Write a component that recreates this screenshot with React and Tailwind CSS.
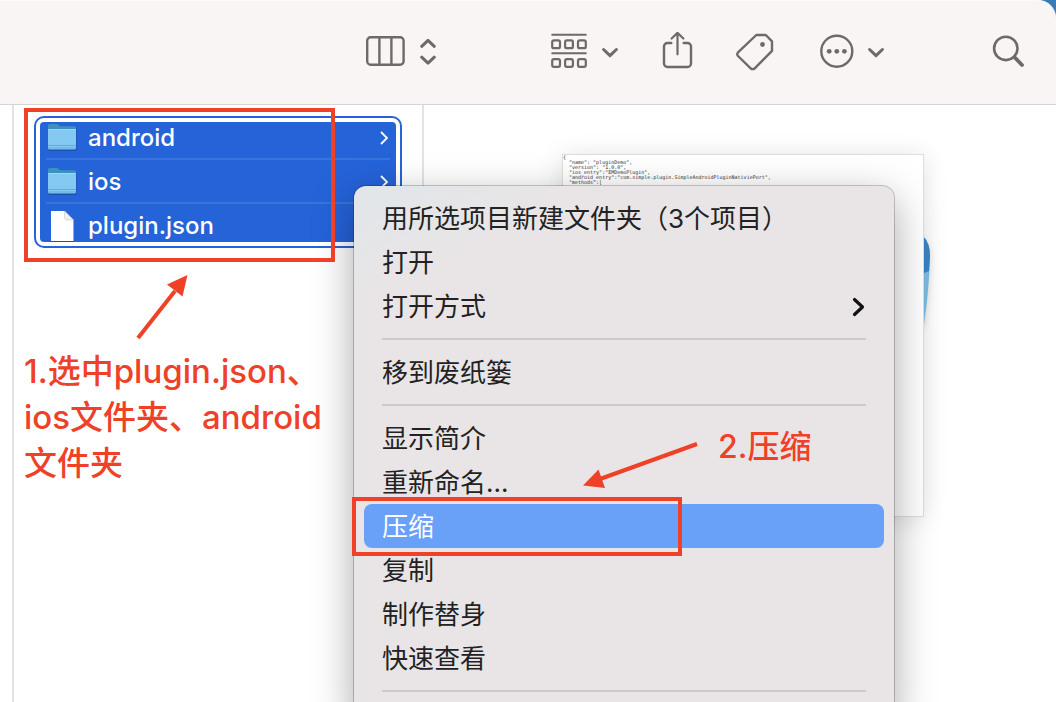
import clsx from 'clsx';

const files = [
    { name: 'android', kind: 'folder' },
    { name: 'ios', kind: 'folder' },
    { name: 'plugin.json', kind: 'file' },
];

const menuGroups = [
    [{ label: '用所选项目新建文件夹（3个项目）' }, { label: '打开' }, { label: '打开方式', submenu: true }],
    [{ label: '移到废纸篓' }],
    [
        { label: '显示简介' },
        { label: '重新命名...' },
        { label: '压缩', active: true },
        { label: '复制' },
        { label: '制作替身' },
        { label: '快速查看' },
    ],
    [],
];

const json = `{
  "name": "pluginDemo",
  "version": "1.0.0",
  "ios_entry":"EMDemoPlugin",
  "android_entry":"com.simple.plugin.SimpleAndroidPluginNativiePort",
  "methods":[`;

function Icon({ className, viewBox, children }) {
    return (
        <svg className={className} viewBox={viewBox} fill="none" stroke="currentColor" strokeWidth="2.4" strokeLinecap="round" strokeLinejoin="round" aria-hidden="true">
            {children}
        </svg>
    );
}

function Chevron() {
    return (
        <Icon className="w-4 h-10" viewBox="0 0 16 40">
            <path d="M1.6 17.5 8 23.7 14.4 17.5" strokeWidth="3" />
        </Icon>
    );
}

function Toolbar() {
    return (
        <header className="h-[105px] shrink-0 flex items-start pt-[31px] pl-[366px] pr-8 bg-[#f9f5f4] border-t border-t-[#fdfbfb] border-b border-b-[#d9d5d4] text-[#6f6a69] rounded-tr-[18px]">
            <button aria-label="Columns" className="flex gap-[15px]">
                <Icon className="w-[39px] h-10" viewBox="0 0 39 40">
                    <rect x="1.2" y="5.2" width="36.4" height="27.6" rx="3.5" />
                    <path d="M13.4 5.2v27.6M25.4 5.2v27.6" />
                </Icon>
                <Icon className="w-4 h-10" viewBox="0 0 16 40">
                    <path d="M1.7 14.3 8 8.3l6.3 6M1.7 25.2 8 31.2l6.3-6" strokeWidth="3" />
                </Icon>
            </button>
            <button aria-label="Group" className="ml-[115px] flex gap-[15px]">
                <Icon className="w-9 h-10" viewBox="0 0 36 40">
                    <path d="M1.2 2.7h33.6M1.2 21.3h33.6" strokeWidth="2" />
                    <rect x="1.2" y="8.4" width="7.8" height="7.8" rx="1.8" strokeWidth="2.2" />
                    <rect x="14.1" y="8.4" width="7.8" height="7.8" rx="1.8" strokeWidth="2.2" />
                    <rect x="27" y="8.4" width="7.8" height="7.8" rx="1.8" strokeWidth="2.2" />
                    <rect x="1.2" y="27.1" width="7.8" height="7.8" rx="1.8" strokeWidth="2.2" />
                    <rect x="14.1" y="27.1" width="7.8" height="7.8" rx="1.8" strokeWidth="2.2" />
                    <rect x="27" y="27.1" width="7.8" height="7.8" rx="1.8" strokeWidth="2.2" />
                </Icon>
                <Chevron />
            </button>
            <button aria-label="Share" className="ml-11">
                <Icon className="w-[31px] h-10" viewBox="0 0 31 40">
                    <path d="M9.3 11H5.5A3.5 3.5 0 0 0 2 14.5v17A3.5 3.5 0 0 0 5.5 35h20a3.5 3.5 0 0 0 3.5-3.5v-17A3.5 3.5 0 0 0 25.5 11h-3.8" />
                    <path d="M15.5 22.3V.8M9.6 6.5 15.5.9 21.4 6.5" strokeWidth="2.2" />
                </Icon>
            </button>
            <button aria-label="Tags" className="ml-[43px]">
                <Icon className="w-[38px] h-10" viewBox="0 0 38 40">
                    <path d="M20.3 3h9.5l6.2 6.3v9.6L18.7 36.3a2.8 2.8 0 0 1-4 0L2 24a2.8 2.8 0 0 1 0-3.6z" />
                    <circle cx="26.5" cy="12.5" r="2.4" fill="currentColor" stroke="none" />
                </Icon>
            </button>
            <button aria-label="More" className="ml-[46px] flex gap-[14px]">
                <Icon className="w-[34px] h-10" viewBox="0 0 34 40">
                    <circle cx="16.8" cy="19.2" r="15.5" />
                    <g fill="currentColor" stroke="none">
                        <circle cx="9.2" cy="19.3" r="2.4" />
                        <circle cx="16.8" cy="19.3" r="2.4" />
                        <circle cx="24.4" cy="19.3" r="2.4" />
                    </g>
                </Icon>
                <Chevron />
            </button>
            <button aria-label="Search" className="ml-auto">
                <Icon className="w-8 h-10" viewBox="0 0 32 40">
                    <circle cx="13.8" cy="16.4" r="11.7" strokeWidth="2.6" />
                    <path d="m22.5 25.2 7.5 7.8" strokeWidth="3.8" />
                </Icon>
            </button>
        </header>
    );
}

function FileIcon({ kind }) {
    if (kind === 'file') {
        return (
            <svg className="w-[30px] h-8" viewBox="0 0 30 32" aria-hidden="true">
                <path d="M3 2h14l8.5 8.5V32H3z" fill="#1b459b" opacity=".6" />
                <path d="M3 1h13.500l9 9v21H3z" fill="#fff" />
                <path d="M16.5 1v6.5q0 2.5 2.5 2.5h6.5z" fill="#f0f0f0" stroke="#c4c4c4" strokeWidth=".6" />
            </svg>
        );
    }
    return (
        <svg className="w-[30px] h-8" viewBox="0 0 30 32" aria-hidden="true">
            <rect x=".5" y="6" width="28" height="23" rx="1.5" fill="#1b459b" opacity=".7" />
            <path d="M0 3.800Q0 2 1.800 2h7.400l3 2.200h14.300Q28 4.200 28 6v6H0z" fill="#3f91bd" />
            <rect y="7" width="28" height="20.5" rx="1.5" fill="#83c9f2" />
            <path d="M0 7.500h28" stroke="#9ad8f8" />
            <path d="M0 23.500h28M0 26h28" stroke="#62add8" />
        </svg>
    );
}

function FileList() {
    return (
        <ul className="p-1 border-2 border-[#2563d9] rounded-[10px] font-medium text-2xl text-white">
            {files.map((file, i) => (
                <li
                    key={file.name}
                    className={clsx(
                        'px-1.5 bg-[#2563d9]',
                        i === 0 && 'h-[38px] rounded-t-[4px]',
                        i === 1 && 'h-11',
                        i === 2 && 'h-[38px] rounded-b-[4px]',
                    )}
                >
                    <button
                        className={clsx(
                            'w-full h-full flex items-center gap-2.5 pl-0.5',
                            i === 0 && 'pb-1',
                            i === 1 && 'pt-0.5',
                            i === 2 && 'pt-1.5',
                            i < 2 && 'border-b-2 border-[#3b73dc]',
                        )}
                    >
                        <FileIcon kind={file.kind} />
                        <span className="grow text-left leading-8">{file.name}</span>
                        {file.kind === 'folder' && (
                            <svg className="w-3 h-4" viewBox="0 0 12 16" fill="none" stroke="white" strokeWidth="1.8" aria-hidden="true">
                                <path d="m3 2 6 6-6 6" />
                            </svg>
                        )}
                    </button>
                </li>
            ))}
        </ul>
    );
}

function Preview() {
    return (
        <section className="grow pl-[138px] pt-[49px]">
            <div className="relative w-[362px] h-[363px]">
                {/* edge of the item stacked behind the page */}
                <svg className="absolute right-[-7px] top-[82px] w-5 h-[90px] drop-shadow-md" viewBox="0 0 20 90" aria-hidden="true">
                    <path d="M0 0h12q7 7 7 20-1 36-6 68H0z" fill="#7ec1ea" />
                    <path d="M0 0h12q7 7 7 20l-1 15-5 2H0z" fill="#3c87c9" />
                </svg>
                <pre className="relative h-full overflow-hidden bg-white border border-[#dedede] shadow-[0_2px_24px_rgba(0,0,0,0.12)] text-[5px] leading-[5px] text-[#333] font-['DejaVu_Sans_Mono',monospace]">{json}</pre>
            </div>
        </section>
    );
}

function ContextMenu() {
    return (
        <nav className="absolute left-[354px] top-[186px] -bottom-5 w-[540px] px-2.5 pt-2.5 overflow-hidden rounded-[12px] bg-[#e9e5e6] bg-linear-150 from-[#e0e6e9] to-[#e9e5e6] to-15% shadow-[0_0_0_1px_rgba(0,0,0,0.2),0_12px_40px_rgba(0,0,0,0.35)] text-[26px] text-[#222]">
            {menuGroups.map((group, i) => (
                <div key={i}>
                    {i > 0 && <hr className="mx-[18px] my-2.5 border-t-2 border-[#cdc9ca]" />}
                    {group.map((item) => (
                        <button
                            key={item.label}
                            className={clsx('w-full h-11 px-[18px] pt-0.5 flex items-center justify-between whitespace-nowrap leading-10', item.active && 'rounded-lg bg-[#69a0f8] text-white')}
                        >
                            {item.label}
                            {item.submenu && (
                                <svg className="w-4 h-6" viewBox="0 0 16 24" fill="none" stroke="#111" strokeWidth="3.2" strokeLinecap="round" strokeLinejoin="round" aria-hidden="true">
                                    <path d="m4.500 4.500 8 7.500-8 7.500" />
                                </svg>
                            )}
                        </button>
                    ))}
                </div>
            ))}
        </nav>
    );
}

function Annotations() {
    return (
        <div className="absolute inset-0 pointer-events-none text-[#ee4127] leading-[46px] font-medium">
            <div className="absolute left-6 top-[108px] w-[311px] h-[154px] border-4 border-current" />
            <div className="absolute left-[352px] top-[497px] w-[330px] h-[59px] border-4 border-current" />
            <svg className="absolute left-[130px] top-[270px] w-[60px] h-[72px]" viewBox="130 270 60 72" fill="currentColor" aria-hidden="true">
                <path d="M138 338 175 291" stroke="currentColor" strokeWidth="4" />
                <path d="m187.500 275-20.500 9.500 15.500 12z" />
            </svg>
            <svg className="absolute left-[580px] top-[438px] w-[120px] h-[54px]" viewBox="580 438 120 54" fill="currentColor" aria-hidden="true">
                <path d="M697 444 600 479" stroke="currentColor" strokeWidth="4" />
                <path d="m583 485.500 15.500-16 6.500 18.500z" />
            </svg>
            <p className="absolute left-6 top-[348px] whitespace-nowrap text-[33px]">
                1.选中plugin.json、<br />
                ios文件夹、android<br />
                文件夹
            </p>
            <p className="absolute left-[718px] top-[424px] whitespace-nowrap text-[32px]">2.压缩</p>
        </div>
    );
}

export default function App() {
    return (
        <div className="relative h-screen overflow-hidden flex flex-col bg-white font-['Inter','Noto_Sans_CJK_SC',sans-serif]">
            <div className="shrink-0 bg-[#3a7ab8]">
                <Toolbar />
            </div>
            <main className="grow flex">
                <div className="w-3.5 shrink-0 border-r-2 border-[#e3e3e3]" />
                <section className="w-[410px] shrink-0 pl-5 pr-5 pt-[11px] border-r-2 border-[#e3e3e3]">
                    <FileList />
                </section>
                <Preview />
            </main>
            <ContextMenu />
            <Annotations />
        </div>
    );
}
